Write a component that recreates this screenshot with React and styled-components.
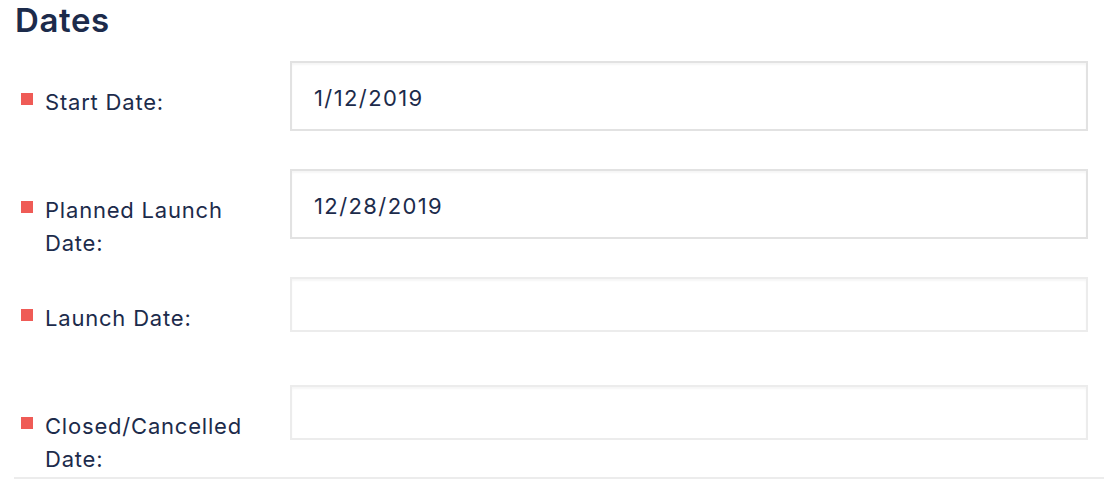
import styled, { createGlobalStyle } from 'styled-components';

const GlobalStyle = createGlobalStyle`
  body {
    margin: 0;
    background: #ffffff;
    font-family: Inter, "Noto Sans", sans-serif;
    color: #1c2b4b;
  }
`;

const Section = styled.section`
  width: 1090px;
  margin-left: 14px;
  border-bottom: 2px solid #ececec;
`;

const Title = styled.h2`
  margin: 0;
  padding-left: 1px;
  height: 61px;
  font-size: 33px;
  line-height: 40px;
  font-weight: 600;
  letter-spacing: 0.6px;
  color: #1c2b4b;
`;

const Row = styled.div`
  display: flex;
  align-items: flex-start;
  min-height: 92px;
  margin-bottom: ${p => (p.$last ? '0' : '16px')};
`;

const Label = styled.div`
  display: flex;
  align-items: flex-start;
  width: 276px;
  padding-top: 25px;
  box-sizing: border-box;
  font-size: 22px;
  line-height: 33px;
  letter-spacing: 0.8px;
  color: #1c2b4b;
`;

const Marker = styled.span`
  flex: none;
  width: 12px;
  height: 12px;
  margin: 7px 12px 0 7px;
  background: #ef5b56;
`;

const LabelText = styled.span`
  width: 220px;
`;

const Field = styled.input`
  width: 798px;
  height: ${p => (p.$tall ? '70px' : '55px')};
  box-sizing: border-box;
  border: 2px solid ${p => (p.$tall ? '#e2e2e2' : '#ececec')};
  box-shadow: inset 0 2px 2px rgba(0, 0, 0, 0.04);
  padding: 4px 22px 0;
  font-family: Inter, "Noto Sans", sans-serif;
  font-size: 22px;
  letter-spacing: 1.4px;
  color: #1c2b4b;
  background: #ffffff;
  outline: none;
`;

const rows = [
  { label: 'Start Date:', value: '1/12/2019' },
  { label: 'Planned Launch Date:', value: '12/28/2019' },
  { label: 'Launch Date:', value: '' },
  { label: 'Closed/Cancelled Date:', value: '' },
];

const App = () => (
  <>
    <GlobalStyle />
    <Section>
      <Title>Dates</Title>
      {rows.map((r, i) => (
        <Row key={r.label} $last={i === rows.length - 1}>
          <Label>
            <Marker />
            <LabelText>{r.label}</LabelText>
          </Label>
          <Field $tall={!!r.value} defaultValue={r.value} readOnly />
        </Row>
      ))}
    </Section>
  </>
);

export default App;
